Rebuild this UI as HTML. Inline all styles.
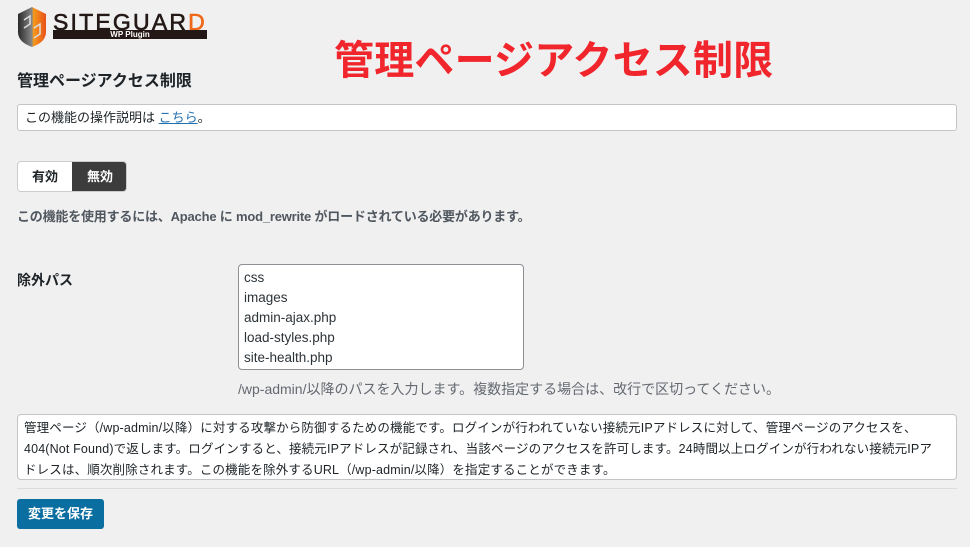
<!DOCTYPE html>
<html><head><meta charset="utf-8"><style>
body{margin:0;width:970px;height:547px;background:#f0f0f1;font-family:"Liberation Sans","Noto Sans CJK JP",sans-serif;color:#1d2327;position:relative;overflow:hidden}
.a{position:absolute}
</style></head><body>
<svg class="a" style="left:16px;top:6px" width="32" height="42" viewBox="0 0 32 42">
<defs><linearGradient id="g" x1="0" x2="1"><stop offset="0" stop-color="#2a2a2a"/><stop offset=".5" stop-color="#888"/><stop offset=".55" stop-color="#f59a1a"/><stop offset="1" stop-color="#e8501a"/></linearGradient></defs>
<path d="M2 8 L16 1 L30 8 L30 26 Q30 36 16 41 Q2 36 2 26Z" fill="url(#g)"/>
<path d="M8 14 L14 10 L14 18 L8 22 M18 22 L24 18 L24 28 L18 32" stroke="#ddd" stroke-width="1.5" fill="none"/>
</svg>
<div class="a" style="left:53px;top:9px;font:23px 'Liberation Sans',sans-serif;letter-spacing:2.2px;color:#231815;-webkit-text-stroke:0.6px #231815">SITEGUAR<span style="color:#ee6a1a;-webkit-text-stroke:0.6px #ee6a1a">D</span></div>
<div class="a" style="left:53px;top:30px;width:154px;height:9px;background:#231815;color:#fff;font:bold 8px 'Liberation Sans',sans-serif;text-align:center;line-height:9px">WP Plugin</div>
<div class="a" style="left:334px;top:28px;font-weight:bold;font-size:40px;color:#f0262c;letter-spacing:0.2px;white-space:nowrap">管理ページアクセス制限</div>
<div class="a" style="left:17px;top:67px;font-size:16px;font-weight:bold">管理ページアクセス制限</div>
<div class="a" style="left:17px;top:104px;background:#fff;border:1px solid #c3c4c7;border-radius:3px;font-size:13px;line-height:25px;padding-left:7px;box-sizing:border-box;width:940px;height:27px">この機能の操作説明は <span style="color:#2271b1;text-decoration:underline">こちら</span>。</div>
<div class="a" style="left:17px;top:161px;width:110px;height:31px;border:1px solid #ccc;border-radius:4px;overflow:hidden;box-sizing:border-box;font-size:13px;font-weight:bold;line-height:29px">
<span class="a" style="left:0;top:0;width:54px;height:29px;background:#fff;text-align:center">有効</span>
<span class="a" style="left:54px;top:0;width:56px;height:29px;background:#3c3c3c;color:#fff;text-align:center">無効</span></div>
<div class="a" style="left:17px;top:206px;font-size:13px;font-weight:bold;color:#50575e;letter-spacing:-0.2px">この機能を使用するには、Apache に mod_rewrite がロードされている必要があります。</div>
<div class="a" style="left:17px;top:270px;font-size:14px;font-weight:bold">除外パス</div>
<div class="a" style="left:238px;top:264px;width:286px;height:106px;background:#fff;border:1px solid #8c8f94;border-radius:4px;box-sizing:border-box;font-size:13.5px;line-height:20px;padding:3px 5px;color:#2c3338">css<br>images<br>admin-ajax.php<br>load-styles.php<br>site-health.php</div>
<div class="a" style="left:238px;top:379px;font-size:14px;color:#646970">/wp-admin/以降のパスを入力します。複数指定する場合は、改行で区切ってください。</div>
<div class="a" style="left:17px;top:414px;width:940px;height:66px;background:#fff;border:1px solid #c3c4c7;border-radius:4px;box-sizing:border-box;font-size:12.5px;line-height:21px;padding:3px 6px;letter-spacing:0.15px;white-space:nowrap;overflow:hidden">管理ページ（/wp-admin/以降）に対する攻撃から防御するための機能です。ログインが行われていない接続元IPアドレスに対して、管理ページのアクセスを、<br>404(Not Found)で返します。ログインすると、接続元IPアドレスが記録され、当該ページのアクセスを許可します。24時間以上ログインが行われない接続元IPア<br>ドレスは、順次削除されます。この機能を除外するURL（/wp-admin/以降）を指定することができます。</div>
<div class="a" style="left:17px;top:488px;width:940px;height:1px;background:#dcdcde"></div>
<div class="a" style="left:17px;top:499px;width:87px;height:30px;background:#0a6fa0;border-radius:3px;color:#fff;font-size:13px;font-weight:bold;text-align:center;line-height:30px">変更を保存</div>
</body></html>
